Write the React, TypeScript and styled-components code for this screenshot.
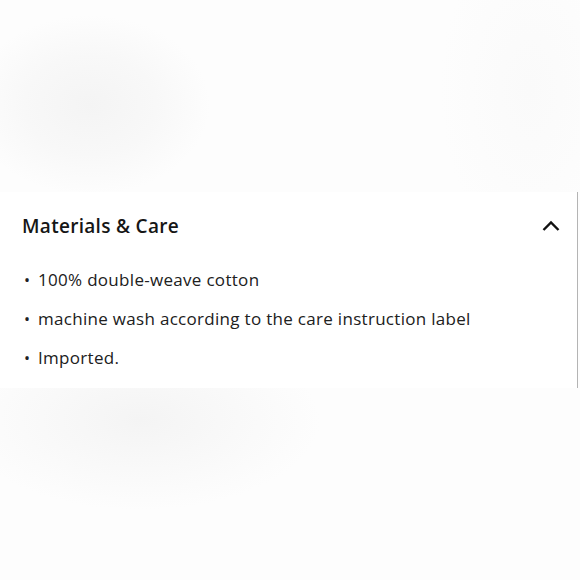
import React from 'react'
import styled, { createGlobalStyle } from 'styled-components'

// ================================================================================================

const GlobalStyle = createGlobalStyle`
  html, body {
    margin: 0;
    padding: 0;
  }

  body {
    width: 580px;
    height: 580px;
    overflow: hidden;
    background: #fdfdfd;
    font-family: "Open Sans", "Noto Sans", sans-serif;
    color: #1c1c1c;
  }
`

// ================================================================================================

const Page = styled.div`
  width: 580px;
  height: 580px;
  display: flex;
  flex-direction: column;
  background:
    radial-gradient(ellipse 120px 90px at 90px 105px, #f4f4f4 0%, #f8f8f8 55%, rgba(253, 253, 253, 0) 100%),
    radial-gradient(ellipse 180px 90px at 140px 420px, #f4f4f4 0%, #f9f9f9 55%, rgba(253, 253, 253, 0) 100%),
    radial-gradient(ellipse 90px 160px at 530px 90px, #fafafa 0%, rgba(253, 253, 253, 0) 100%),
    #fdfdfd;
`

const Backdrop = styled.div<{ $h: number }>`
  height: ${p => p.$h}px;
  flex-shrink: 0;
`

const Panel = styled.section`
  width: 578px;
  height: 196px;
  box-sizing: border-box;
  background: #fff;
  border-right: 1px solid #b4b4b4;
  padding: 22px 16px 0 22px;
  display: flex;
  flex-direction: column;
`

const Header = styled.div`
  display: flex;
  align-items: center;
  justify-content: space-between;
  height: 24px;
`

const Title = styled.h2`
  margin: 0;
  font-size: 19px;
  font-weight: 600;
  letter-spacing: 0.3px;
  color: #161616;
`

const Toggle = styled.button`
  display: flex;
  align-items: center;
  justify-content: center;
  padding: 0;
  border: none;
  background: transparent;
  width: 20px;
  height: 20px;
`

const List = styled.ul`
  list-style: none;
  margin: 31px 0 0;
  padding: 0;
  display: flex;
  flex-direction: column;
  gap: 17px;
`

const Item = styled.li`
  display: flex;
  align-items: center;
  font-size: 17px;
  line-height: 22px;
  letter-spacing: 0.3px;
  color: #202020;

  &::before {
    content: '•';
    width: 16px;
    padding-left: 2px;
    box-sizing: border-box;
    font-size: 16px;
  }
`

// ================================================================================================

const items = [
  '100% double-weave cotton',
  'machine wash according to the care instruction label',
  'Imported.',
]

const App = () => (
  <>
    <GlobalStyle />
    <Page>
      <Backdrop $h={192} />
      <Panel>
        <Header>
          <Title>Materials &amp; Care</Title>
          <Toggle aria-label="Collapse">
            <svg width="18" height="12" viewBox="0 0 18 12" fill="none">
              <path d="M1.5 10 L9 2.5 L16.5 10" stroke="#111" strokeWidth="2.4" />
            </svg>
          </Toggle>
        </Header>
        <List>
          {items.map(text => (
            <Item key={text}>{text}</Item>
          ))}
        </List>
      </Panel>
    </Page>
  </>
)

// ================================================================================================

export default App
